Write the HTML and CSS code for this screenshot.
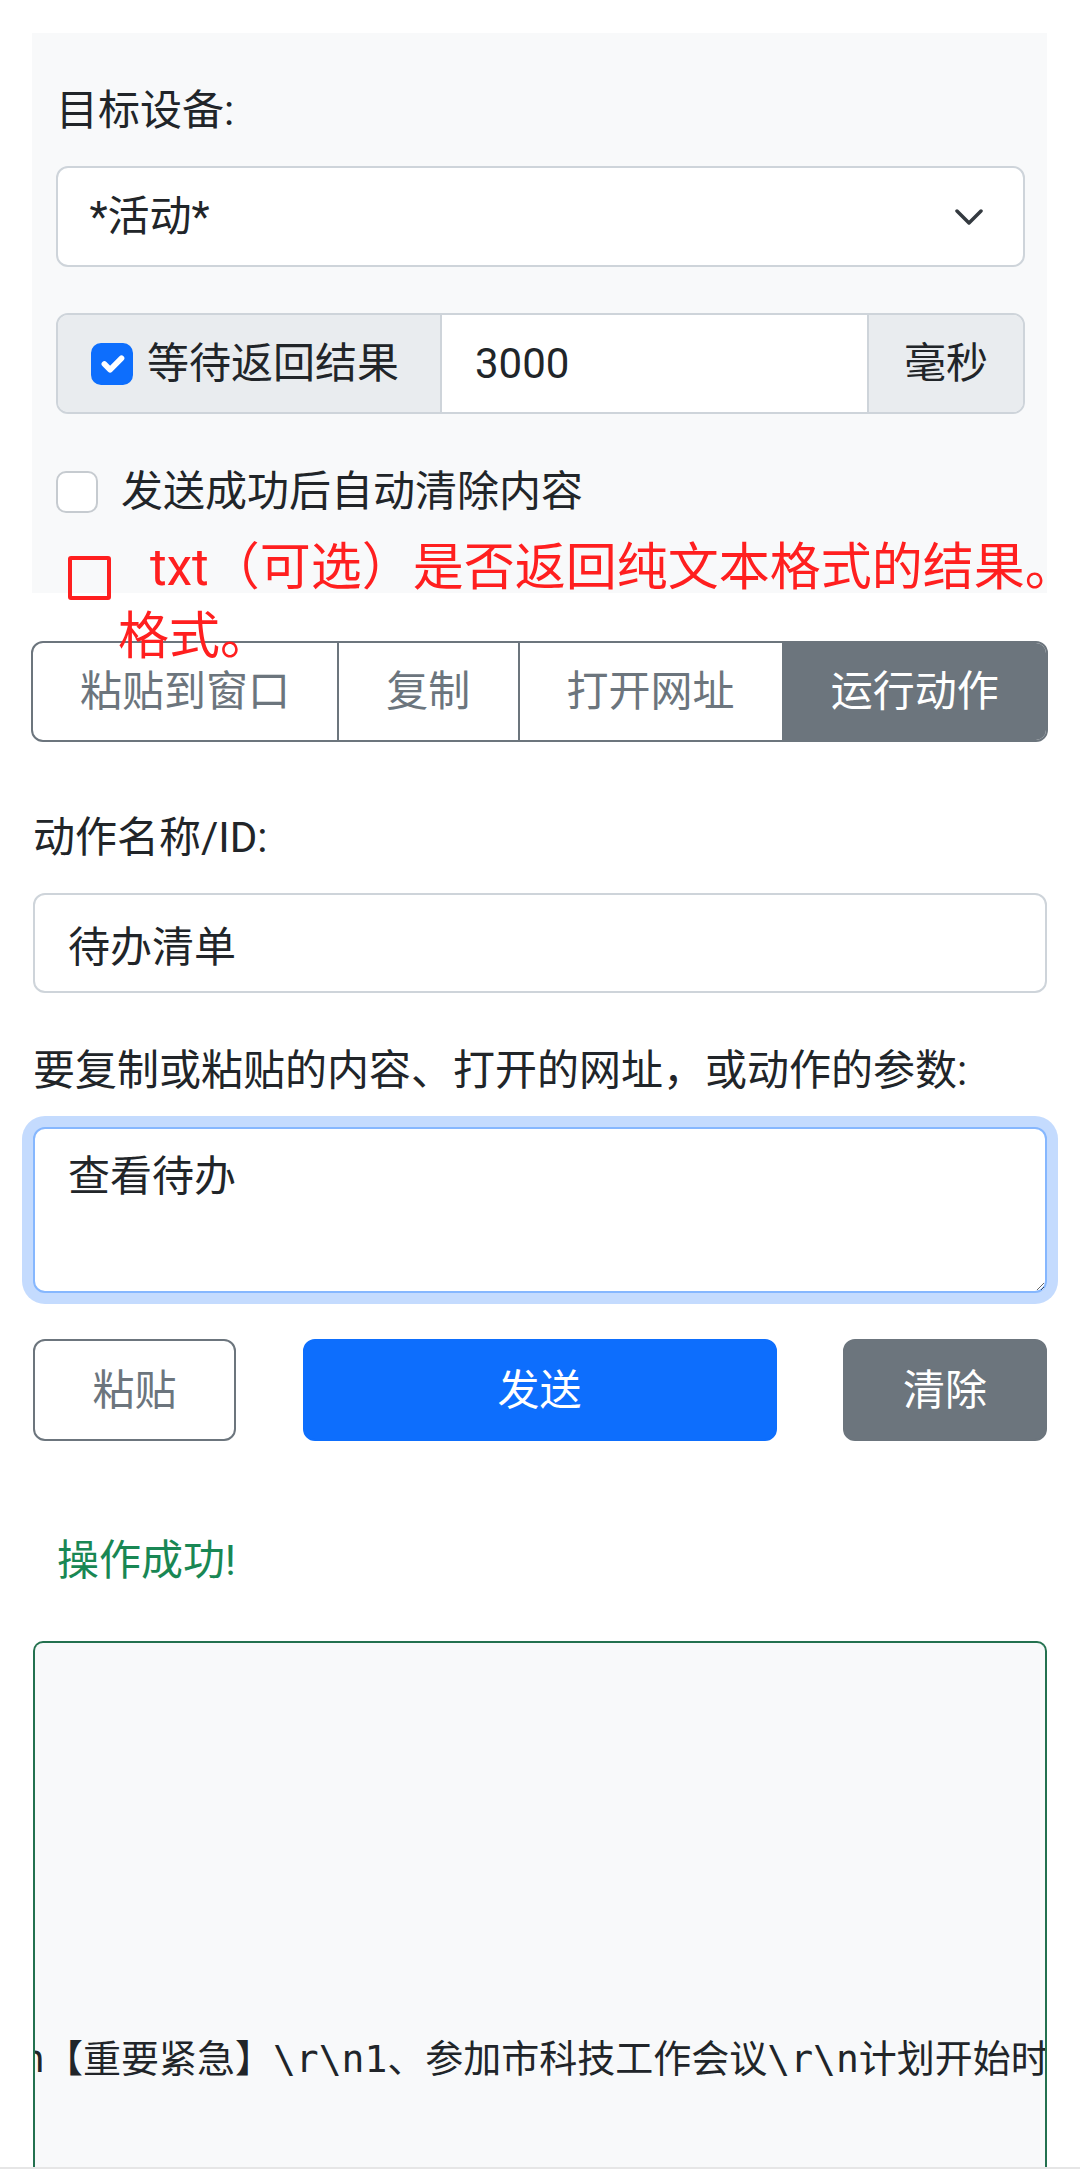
FILE: index.html
```html
<!DOCTYPE html>
<html lang="zh-CN">
<head>
<meta charset="utf-8">
<title>发送</title>
<link rel="stylesheet" href="styles.css">
</head>
<body>
<div class="page">
  <section class="panel">
    <div class="label">目标设备:</div>
    <div class="select">
      <span>*活动*</span>
      <svg class="chev" width="28" height="16" viewBox="0 0 28 16"><path d="M2 2l12 12 12-12" fill="none" stroke="#343a40" stroke-width="3.5" stroke-linecap="round" stroke-linejoin="round"/></svg>
    </div>
    <div class="igroup">
      <label class="addon addon-check"><span class="cb cb-on"><svg width="38" height="38" viewBox="0 0 20 20"><path d="m6 10 3 3 6-6" fill="none" stroke="#fff" stroke-width="3" stroke-linecap="round" stroke-linejoin="round"/></svg></span>等待返回结果</label>
      <input class="ig-input" type="text" value="3000">
      <span class="addon addon-unit">毫秒</span>
    </div>
    <label class="check-row"><span class="cb"></span>发送成功后自动清除内容</label>
    <div class="annot">
      <span class="annot-box"></span>
      <div class="annot-text">txt（可选）是否返回纯文本格式的结果。<br>格式。</div>
    </div>
  </section>

  <div class="tabs">
    <div class="tab">粘贴到窗口</div>
    <div class="tab">复制</div>
    <div class="tab">打开网址</div>
    <div class="tab tab-active">运行动作</div>
  </div>

  <div class="field-label">动作名称/ID:</div>
  <input class="text-input" type="text" value="待办清单">

  <div class="field-label field-label2">要复制或粘贴的内容、打开的网址，或动作的参数:</div>
  <textarea class="textarea">查看待办</textarea>

  <div class="actions">
    <button class="btn btn-outline">粘贴</button>
    <button class="btn btn-primary">发送</button>
    <button class="btn btn-secondary">清除</button>
  </div>

  <div class="status">操作成功!</div>

  <div class="result">
    <pre class="result-text">n【重要紧急】\r\n1、参加市科技工作会议\r\n计划开始时间</pre>
  </div>
</div>
<div class="bottom-line"></div>
</body>
</html>
```

FILE: styles.css
```css
html, body {
  margin: 0;
  background: #fff;
}
body {
  font-family: Roboto, "Noto Sans CJK SC", sans-serif;
  font-size: 42px;
  line-height: 63px;
  color: #212529;
}
.page {
  padding: 33px 33px 0 33px;
}

/* top panel */
.panel {
  position: relative;
  margin-left: -1px;
  background: #f8f9fa;
  padding: 46px 22px 70px 24px;
}
.label {
  margin-bottom: 24px;
}
.select {
  height: 101px;
  box-sizing: border-box;
  border: 2px solid #ced4da;
  border-radius: 12px;
  background: #fff;
  display: flex;
  align-items: center;
  justify-content: space-between;
  padding: 0 40px 0 31.5px;
  margin-bottom: 46px;
}
.chev {
  flex: none;
}
.igroup {
  display: flex;
  height: 101px;
  box-sizing: border-box;
  border: 2px solid #ced4da;
  border-radius: 12px;
  overflow: hidden;
  margin-bottom: 46px;
}
.addon {
  display: flex;
  align-items: center;
  background: #e9ecef;
  flex: none;
}
.addon-check {
  padding: 0 41px 0 33px;
}
.addon-unit {
  padding: 0 35px;
}
.cb {
  width: 42px;
  height: 42px;
  box-sizing: border-box;
  border-radius: 10px;
  border: 2px solid #c6cbd0;
  background: #fff;
  flex: none;
  display: flex;
  align-items: center;
  justify-content: center;
}
.cb-on {
  background: #0d6efd;
  border-color: #0d6efd;
  margin-right: 14px;
}
.ig-input {
  flex: 1;
  min-width: 0;
  border: none;
  border-left: 2px solid #ced4da;
  border-right: 2px solid #ced4da;
  padding: 0 0 0 33px;
  margin: 0;
  font: inherit;
  color: inherit;
  background: #fff;
  outline: none;
}
.check-row {
  display: flex;
  align-items: center;
  min-height: 63px;
}
.check-row .cb {
  margin-right: 23px;
}

/* red annotation overlay */
.annot {
  position: absolute;
  left: 36px;
  top: 500px;
  display: flex;
  align-items: flex-start;
  color: #ff1f1f;
  font-size: 51px;
  line-height: 69px;
}
.annot-box {
  width: 43px;
  height: 44px;
  box-sizing: border-box;
  border: 4px solid #ff1f1f;
  border-radius: 3px;
  margin-top: 23px;
  flex: none;
}
.annot-text {
  margin-left: 7px;
  text-indent: 32px;
  white-space: nowrap;
}

/* segmented tabs */
.tabs {
  display: flex;
  margin: 48px -1px 0 -2px;
  height: 101px;
  box-sizing: border-box;
  border: 2px solid #6c757d;
  border-radius: 12px;
  overflow: hidden;
}
.tab {
  flex: 1 1 auto;
  display: flex;
  align-items: center;
  justify-content: center;
  padding: 0 31.5px;
  color: #6c757d;
  white-space: nowrap;
}
.tab + .tab {
  border-left: 2px solid #6c757d;
}
.tab-active {
  background: #6c757d;
  color: #fff;
}

/* fields */
.field-label {
  margin-top: 64px;
  margin-bottom: 24px;
}
.field-label2 {
  margin-top: 46px;
  margin-bottom: 25px;
}
.text-input {
  display: block;
  width: 100%;
  box-sizing: border-box;
  height: 100px;
  border: 2px solid #ced4da;
  border-radius: 12px;
  padding: 0 33px;
  margin: 0;
  font: inherit;
  color: inherit;
  background: #fff;
  outline: none;
}
.textarea {
  display: block;
  width: 100%;
  box-sizing: border-box;
  height: 166px;
  border: 2px solid #86b7fe;
  border-radius: 12px;
  padding: 16px 33px;
  margin: 0;
  box-shadow: 0 0 0 11px #c4dbfe;
  font: inherit;
  color: inherit;
  background: #fff;
  resize: vertical;
  outline: none;
}

/* action buttons */
.actions {
  display: grid;
  grid-template-columns: 203px 474px 204px;
  justify-content: space-between;
  margin-top: 46px;
}
.btn {
  height: 102px;
  box-sizing: border-box;
  border-radius: 12px;
  border: 2px solid transparent;
  padding: 0;
  font: inherit;
  display: flex;
  align-items: center;
  justify-content: center;
}
.btn-outline {
  border-color: #6c757d;
  color: #6c757d;
  background: #fff;
}
.btn-primary {
  background: #0d6efd;
  border-color: #0d6efd;
  color: #fff;
}
.btn-secondary {
  background: #6c757d;
  border-color: #6c757d;
  color: #fff;
}

/* status + result */
.status {
  margin-top: 88px;
  padding-left: 24px;
  color: #198754;
}
.result {
  margin-top: 49px;
  height: 526px;
  box-sizing: border-box;
  border: 2px solid #23714f;
  border-bottom: none;
  border-radius: 10px 10px 0 0;
  background: #f8f9fa;
  overflow: hidden;
  padding-top: 388px;
}
.result-text {
  margin: 0 0 0 -13px;
  font-family: "DejaVu Sans Mono", "Noto Sans CJK SC", monospace;
  font-size: 38px;
  line-height: 57px;
  white-space: pre;
  color: #212529;
}
.bottom-line {
  height: 2px;
  background: #e6e6e6;
}
```
